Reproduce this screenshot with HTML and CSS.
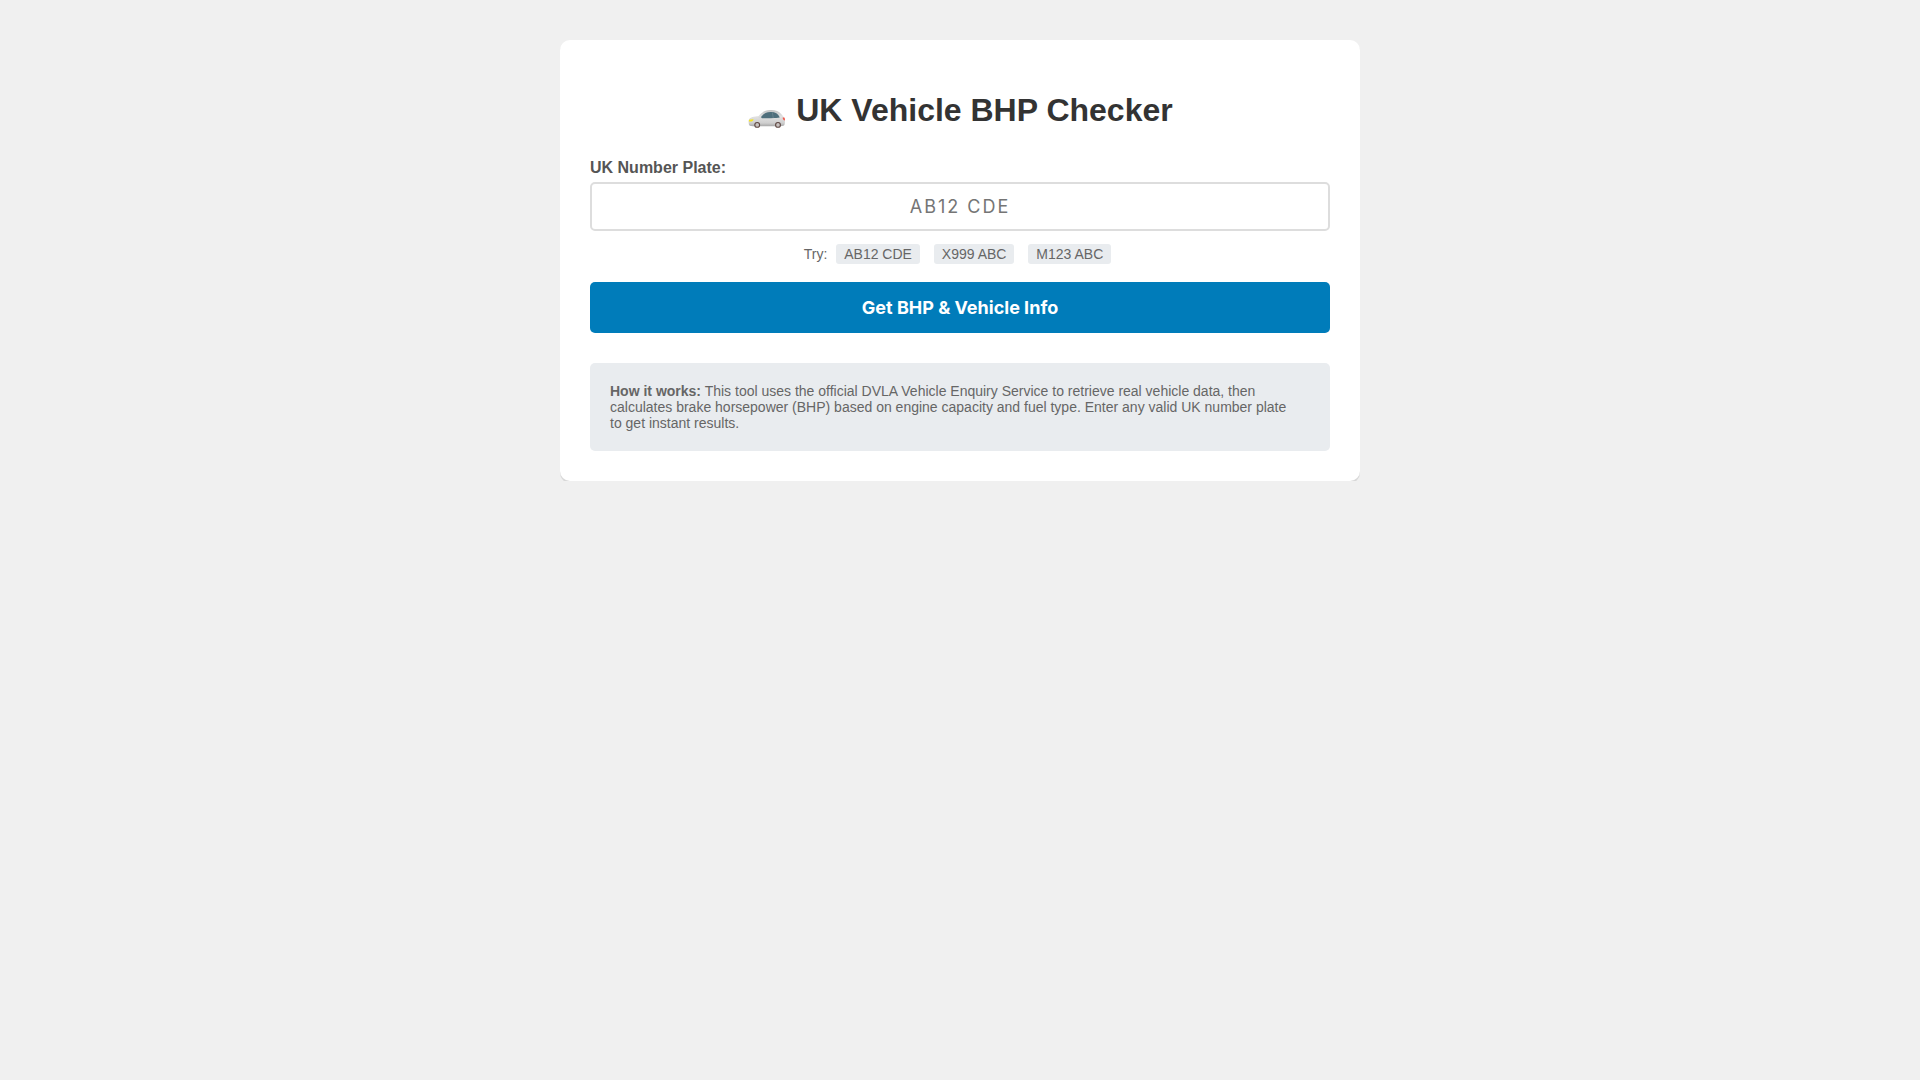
FILE: index.html
```html
<!DOCTYPE html>
<html lang="en">
<head>
<meta charset="UTF-8">
<meta name="viewport" content="width=device-width, initial-scale=1.0">
<title>UK Vehicle BHP Checker</title>
<link rel="stylesheet" href="styles.css">
</head>
<body>
<div class="container">
    <h1>
        <svg class="car" viewBox="0 0 40 20" aria-hidden="true">
            <defs>
                <linearGradient id="paint" x1="0" y1="0" x2="0" y2="1">
                    <stop offset="0" stop-color="#c4c4c4"/>
                    <stop offset="0.4" stop-color="#e2e2e2"/>
                    <stop offset="0.8" stop-color="#cfcfcf"/>
                    <stop offset="1" stop-color="#a8a8a8"/>
                </linearGradient>
            </defs>
            <path fill="url(#paint)" d="M2 10.5C3 8.6 7 7.4 11.6 7.1C14.500 3.500 18 1.200 23 1.100C28 0.900 32 2 34.200 5L37 8.300C38.200 10.500 38.200 14 37.400 16C36.500 17.200 34 17.200 31 17.200H6C3 17.200 2 16.500 1.800 15C1.500 13 1.500 11.500 2 10.500Z"/>
            <path fill="#4f6f7c" d="M13.600 8.600C15.300 5.500 18.500 3.300 23.500 3.100C28 3 31 4.300 32.700 8.600C31 9.200 28 9.200 24 9.200H15Z"/>
            <path fill="none" stroke="#7f959d" stroke-width="0.500" d="M25.300 3.200L26.300 9.200"/>
            <ellipse cx="13" cy="8.600" rx="1.400" ry="1.100" fill="#d8d8d8"/>
            <path fill="#f8e71c" d="M2 10.700L6.500 10.300C6.500 12 4.500 12.900 1.800 12.500Z"/>
            <path fill="#f2564a" d="M35.700 8.400L37.300 8.600C38 9.500 38 10.500 37.900 11.500C36.500 11.200 35.600 10 35.700 8.400Z"/>
            <circle cx="10.200" cy="15.900" r="2.400" fill="#c9c3c1" stroke="#5d4540" stroke-width="1.100"/>
            <circle cx="31" cy="15.900" r="2.400" fill="#c9c3c1" stroke="#5d4540" stroke-width="1.100"/>
        </svg>
        UK Vehicle BHP Checker
    </h1>
    <form>
        <div class="form-group">
            <label for="plate">UK Number Plate:</label>
            <input type="text" id="plate" name="plate" placeholder="AB12 CDE" maxlength="8">
        </div>
        <div class="examples">
            Try:
            <button type="button" class="example">AB12 CDE</button>
            <button type="button" class="example">X999 ABC</button>
            <button type="button" class="example">M123 ABC</button>
        </div>
        <button type="submit" class="submit">Get BHP &amp; Vehicle Info</button>
    </form>
    <div class="info">
        <strong>How it works:</strong> This tool uses the official DVLA Vehicle Enquiry Service to retrieve real vehicle data, then calculates brake horsepower (BHP) based on engine capacity and fuel type. Enter any valid UK number plate to get instant results.
    </div>
</div>
</body>
</html>
```
FILE: styles.css
```css
body {
    font-family: "Liberation Sans", Arial, sans-serif;
    max-width: 800px;
    margin: 40px auto;
    background: #f0f0f0;
}
.container {
    background: #fff;
    padding: 30px;
    border-radius: 10px;
    box-shadow: 0 2px 0 #d8d8d8;
}
h1 {
    margin: 22px 0 30px;
    font-size: 32px;
    text-align: center;
    color: #333;
}
.car {
    width: 40px;
    height: 20px;
    vertical-align: -8px;
}
label {
    display: block;
    margin-bottom: 5px;
    font-weight: bold;
    color: #555;
}
input {
    width: 100%;
    box-sizing: border-box;
    padding: 12px;
    border: 2px solid #ddd;
    border-radius: 5px;
    font-family: Inter, sans-serif;
    font-size: 18px;
    letter-spacing: 2px;
    text-align: center;
}
.examples {
    margin: 13px 0 18px;
    font-size: 14px;
    text-align: center;
    color: #666;
}
.example {
    margin: 0 5px;
    padding: 2px 8px;
    border: 0;
    border-radius: 3px;
    background: #e9ecef;
    color: #666;
    font: inherit;
    cursor: pointer;
}
.submit {
    width: 100%;
    padding: 15px;
    border: 0;
    border-radius: 5px;
    background: #007cba;
    color: #fff;
    font-family: Inter, sans-serif;
    font-size: 18px;
    font-weight: bold;
    cursor: pointer;
}
.info {
    margin-top: 30px;
    padding: 20px 30px 20px 20px;
    border-radius: 5px;
    background: #e9ecef;
    font-size: 14px;
    color: #666;
}
```
